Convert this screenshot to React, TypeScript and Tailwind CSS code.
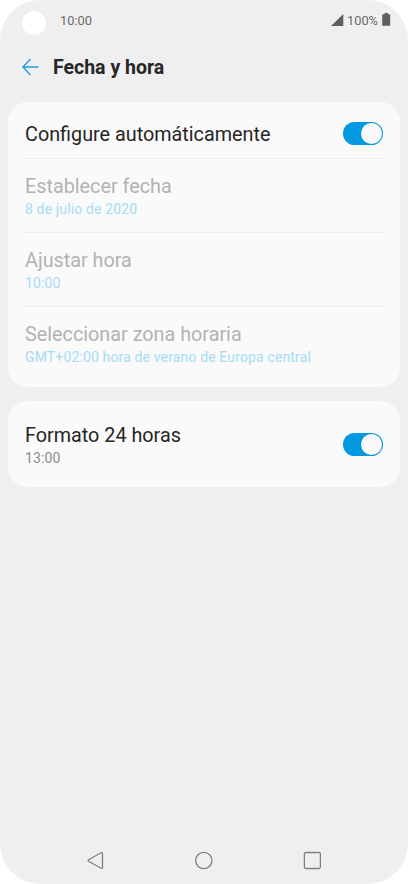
import React, { useState } from "react";

type ToggleProps = {
  label: string;
  checked: boolean;
  onChange: (checked: boolean) => void;
};

const Toggle = ({ label, checked, onChange }: ToggleProps) => (
  <button
    role="switch"
    aria-label={label}
    aria-checked={checked}
    onClick={() => onChange(!checked)}
    className={
      checked
        ? "flex h-[23px] w-[40.5px] shrink-0 items-center justify-end rounded-full bg-[#0099e0] p-px"
        : "flex h-[23px] w-[40.5px] shrink-0 items-center justify-start rounded-full bg-[#b5b5b5] p-px"
    }
  >
    <span className="h-[21px] w-[21px] rounded-full bg-[#fafafa]" />
  </button>
);

const disabledRows = [
  { title: "Establecer fecha", value: "8 de julio de 2020" },
  { title: "Ajustar hora", value: "10:00" },
  {
    title: "Seleccionar zona horaria",
    value: "GMT+02:00 hora de verano de Europa central",
  },
];

const StatusBar = () => (
  <div className="flex h-[42px] items-start pl-[22px] pr-[17px] text-[12.8px] leading-4 text-[#6b6b6b]">
    <span className="mt-[11px] h-6 w-6 rounded-full bg-white" />
    <span className="ml-3.5 mt-[13px]">10:00</span>
    <div className="ml-auto mt-[13px] flex items-start">
      <svg
        className="mt-px"
        width="13"
        height="12"
        viewBox="0 0 13 12"
        fill="#606060"
      >
        <path d="M12.3 0v12H0z" />
      </svg>
      <span className="ml-[3px]">100%</span>
      <svg
        className="ml-[4px]"
        width="9"
        height="13"
        viewBox="0 0 9 13"
        fill="#606060"
      >
        <path d="M2.5 0h3.500v1.300H7.600q.6 0 .6.6v10.300q0 .6-.6.6H.8q-.6 0-.6-.6V1.900q0-.6.6-.6h1.700z" />
      </svg>
    </div>
  </div>
);

const NavBar = () => (
  <div className="mt-auto flex h-[47px] items-center pl-[86px] text-[#808080]">
    <svg
      width="20"
      height="20"
      viewBox="0 0.5 20 20"
      fill="none"
      stroke="currentColor"
      strokeWidth="1.3"
    >
      <path d="M2.600 9.200 15 2.300q1.500-.6 1.500 1v13.400q0 1.600-1.500 1L2.600 10.800q-1.200-.8 0-1.600z" />
    </svg>
    <svg
      className="ml-[88px]"
      width="20"
      height="20"
      viewBox="0 0.5 20 20"
      fill="none"
      stroke="currentColor"
      strokeWidth="1.3"
    >
      <circle cx="9.800" cy="10" r="8.200" />
    </svg>
    <svg
      className="ml-[88px]"
      width="20"
      height="20"
      viewBox="0 0.5 20 20"
      fill="none"
      stroke="currentColor"
      strokeWidth="1.3"
    >
      <rect x="2.400" y="2" width="16" height="16" rx="1.500" />
    </svg>
  </div>
);

const App = () => {
  const [automatic, setAutomatic] = useState(true);
  const [format24, setFormat24] = useState(true);

  return (
    <div className="min-h-screen bg-white">
      <div className="flex h-[884px] w-[408px] flex-col overflow-hidden rounded-[40px] bg-[#efefef] font-[Roboto,sans-serif]">
        <StatusBar />
        <div className="flex h-[60px] items-start pl-[22px] pt-[14px]">
          <svg
            className="mt-[2px]"
            width="17"
            height="18"
            viewBox="0 0 17 18"
            fill="none"
            stroke="#1a9fe0"
            strokeWidth="1.4"
          >
            <path d="M8.500 1 .9 9l7.600 8M.9 9H16.500" />
          </svg>
          <h1 className="ml-3.5 text-[19.5px] font-bold leading-6 text-[#262626]">
            Fecha y hora
          </h1>
        </div>

        <div className="mx-2 h-[284.5px] rounded-[20px] bg-[#fafafa] px-3.5">
          <div className="flex h-14 items-center justify-between pl-[3px] pr-[3px] pt-[6px]">
            <span className="pt-[3px] text-[19.8px] leading-6 text-[#262626]">
              Configure automáticamente
            </span>
            <Toggle
              label="Configure automáticamente"
              checked={automatic}
              onChange={setAutomatic}
            />
          </div>
          {disabledRows.map((row) => (
            <div
              key={row.title}
              className="h-[74px] border-t border-[#efefef] px-[3px] pt-4"
            >
              <div className="text-[19.8px] leading-6 text-[#b2b2b2]">
                {row.title}
              </div>
              <div className="text-[14px] leading-5 tracking-[0.14px] text-[#a5dcf6]">
                {row.value}
              </div>
            </div>
          ))}
        </div>

        <div className="mx-2 mt-[14.5px] flex h-[86px] items-center justify-between rounded-[20px] bg-[#fafafa] px-[17px]">
          <div className="pt-1">
            <div className="text-[19.8px] leading-6 text-[#262626]">
              Formato 24 horas
            </div>
            <div className="text-[14px] leading-5 tracking-[0.14px] text-[#8c8c8c]">
              13:00
            </div>
          </div>
          <Toggle
            label="Formato 24 horas"
            checked={format24}
            onChange={setFormat24}
          />
        </div>

        <NavBar />
      </div>
    </div>
  );
};

export default App;
